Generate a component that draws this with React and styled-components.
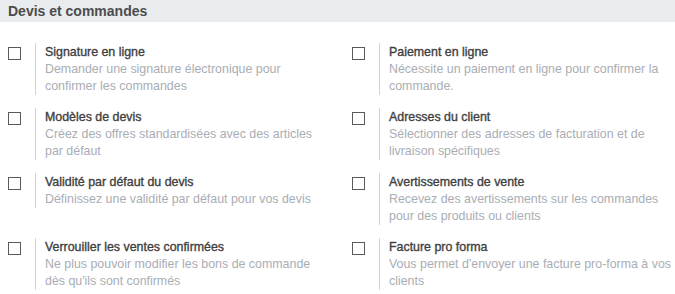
import React from 'react';
import styled, { createGlobalStyle } from 'styled-components';

const GlobalStyle = createGlobalStyle`
  body {
    margin: 0;
    background: #ffffff;
    font-family: "Liberation Sans", Arial, sans-serif;
    overflow: hidden;
  }
`;

const Section = styled.div`
  width: 675px;
`;

const Header = styled.h2`
  margin: 0;
  height: 22px;
  padding: 0 8px;
  background: #e9ecef;
  color: #4c4c4c;
  font-size: 14px;
  font-weight: bold;
  line-height: 23px;
`;

const Grid = styled.div`
  display: grid;
  grid-template-columns: 344px 331px;
  row-gap: 13px;
  padding-top: 21px;
`;

const Box = styled.div`
  display: flex;
  align-items: flex-start;
  padding-left: 8px;
`;

const LeftPane = styled.div`
  width: 27px;
  flex: none;
  padding-top: 4px;
`;

const Checkbox = styled.span`
  display: block;
  width: 11px;
  height: 11px;
  border: 1px solid #5a5a5a;
  background: #ffffff;
`;

const RightPane = styled.div`
  border-left: 1px solid #d3d3d3;
  padding: 1px 0 0 9px;
  width: 283px;
`;

const Title = styled.div`
  color: #3f3f3f;
  font-size: 12.4px;
  font-weight: normal;
  -webkit-text-stroke: 0.35px #3f3f3f;
  line-height: 17px;
`;

const Description = styled.div`
  color: #a9adb4;
  font-size: 12.4px;
  line-height: 17px;
`;

const settings = [
  ['Signature en ligne', 'Demander une signature électronique pour confirmer les commandes'],
  ['Paiement en ligne', 'Nécessite un paiement en ligne pour confirmer la commande.'],
  ['Modèles de devis', 'Créez des offres standardisées avec des articles par défaut'],
  ['Adresses du client', 'Sélectionner des adresses de facturation et de livraison spécifiques'],
  ['Validité par défaut du devis', 'Définissez une validité par défaut pour vos devis'],
  ['Avertissements de vente', 'Recevez des avertissements sur les commandes pour des produits ou clients'],
  ['Verrouiller les ventes confirmées', 'Ne plus pouvoir modifier les bons de commande dès qu\'ils sont confirmés'],
  ['Facture pro forma', 'Vous permet d\'envoyer une facture pro-forma à vos clients'],
];

const App = () => (
  <>
    <GlobalStyle />
    <Section>
      <Header>Devis et commandes</Header>
      <Grid>
        {settings.map(([title, desc], i) => (
          <Box key={i}>
            <LeftPane>
              <Checkbox />
            </LeftPane>
            <RightPane>
              <Title>{title}</Title>
              <Description>{desc}</Description>
            </RightPane>
          </Box>
        ))}
      </Grid>
    </Section>
  </>
);

export default App;
